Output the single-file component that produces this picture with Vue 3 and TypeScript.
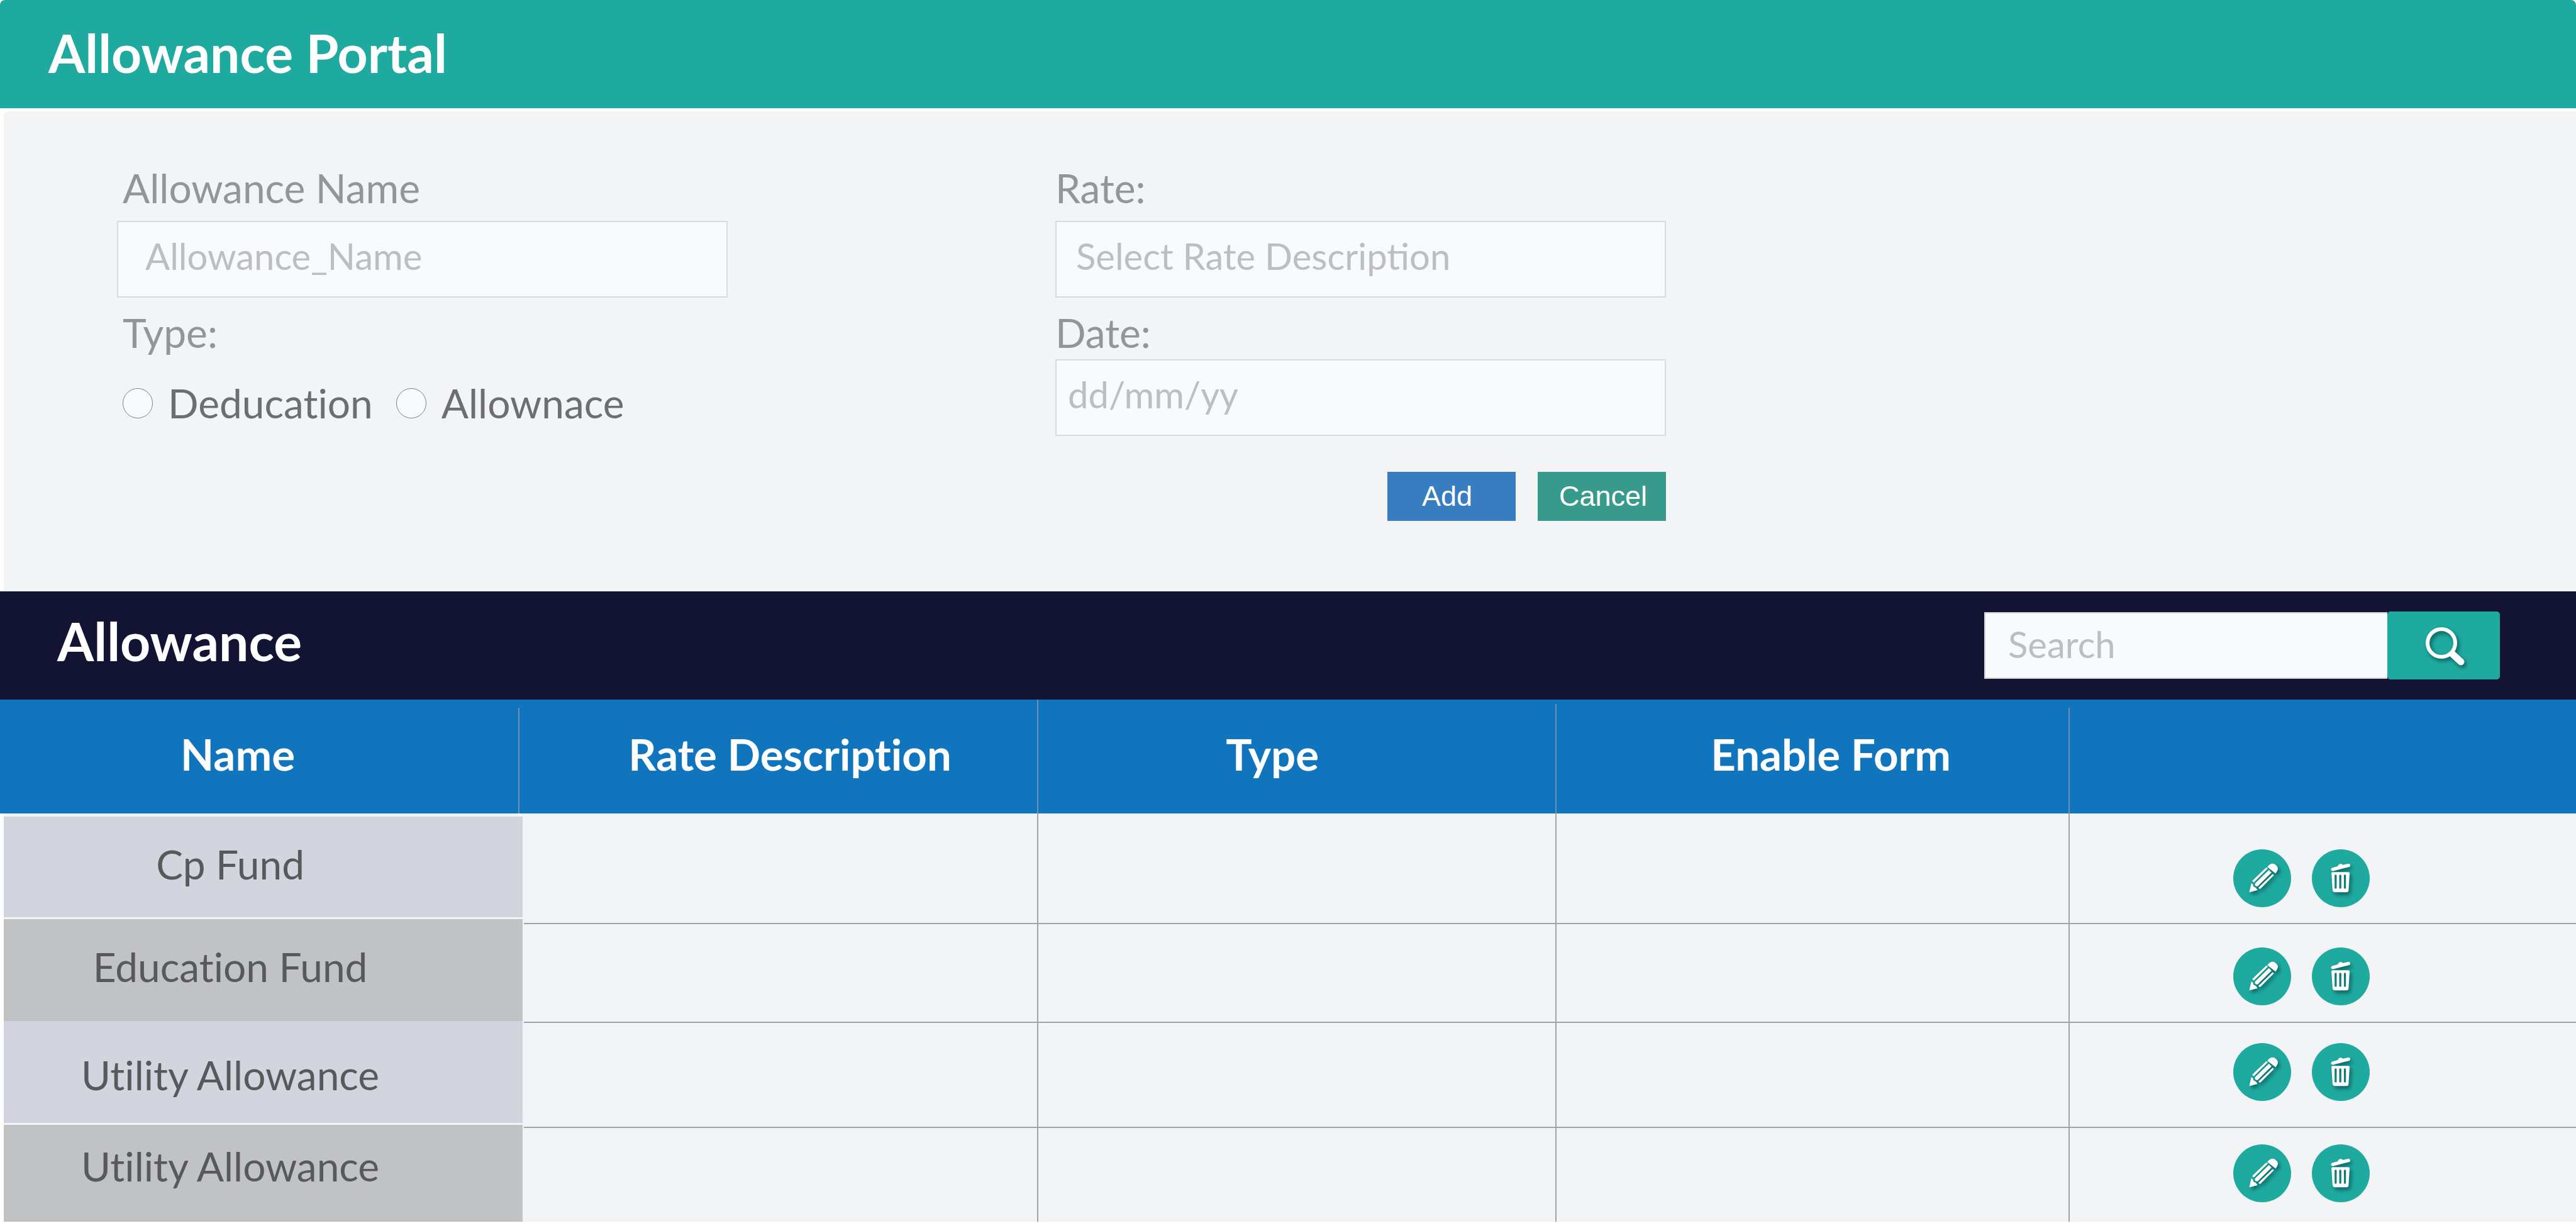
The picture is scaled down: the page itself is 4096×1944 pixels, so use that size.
<script setup lang="ts">
import { ref } from 'vue'

interface Allowance {
  id: number
  name: string
}

const allowanceName = ref('')
const rate = ref('')
const date = ref('')
const type = ref('')
const query = ref('')

const allowances: Allowance[] = [
  { id: 1, name: 'Cp Fund' },
  { id: 2, name: 'Education Fund' },
  { id: 3, name: 'Utility Allowance' },
  { id: 4, name: 'Utility Allowance' },
]
</script>

<template>
  <div class="page">
    <header class="topbar">
      <h1>Allowance Portal</h1>
    </header>

    <form class="panel" @submit.prevent>
      <div class="column">
        <label class="label" for="name">Allowance Name</label>
        <input id="name" v-model="allowanceName" class="field wide-inset" type="text" placeholder="Allowance_Name" />
        <fieldset>
          <legend class="label">Type:</legend>
          <div class="radios">
            <label><input v-model="type" type="radio" name="type" value="deduction" />Deducation</label>
            <label><input v-model="type" type="radio" name="type" value="allowance" />Allownace</label>
          </div>
        </fieldset>
      </div>
      <div class="column">
        <label class="label" for="rate">Rate:</label>
        <input id="rate" v-model="rate" class="field" type="text" placeholder="Select Rate Description" />
        <label class="label date-label" for="date">Date:</label>
        <input id="date" v-model="date" class="field narrow-inset" type="text" placeholder="dd/mm/yy" />
        <div class="actions">
          <button class="add" type="submit">Add</button>
          <button class="cancel" type="reset">Cancel</button>
        </div>
      </div>
    </form>

    <section>
      <div class="listbar">
        <h2>Allowance</h2>
        <form class="search" role="search" @submit.prevent>
          <input v-model="query" type="text" placeholder="Search" aria-label="Search" />
          <button type="submit" aria-label="Run search">
            <svg class="icon" viewBox="0 0 64 64" width="64" height="64" fill="none" stroke="#fff">
              <circle cx="28" cy="28" r="22" stroke-width="6" />
              <path d="M46 46 L59 58" stroke-width="11" stroke-linecap="round" />
            </svg>
          </button>
        </form>
      </div>

      <table>
        <colgroup>
          <col class="c-name" />
          <col class="c-rate" />
          <col class="c-type" />
          <col class="c-form" />
          <col />
        </colgroup>
        <thead>
          <tr>
            <th class="h-name" scope="col">Name</th>
            <th class="h-rate" scope="col">Rate Description</th>
            <th class="h-type" scope="col">Type</th>
            <th class="h-form" scope="col">Enable Form</th>
            <td></td>
          </tr>
        </thead>
        <tbody>
          <tr v-for="item in allowances" :key="item.id">
            <th class="name" scope="row"><div class="name-box">{{ item.name }}</div></th>
            <td></td>
            <td></td>
            <td></td>
            <td class="tools">
              <div>
                <button type="button" aria-label="Edit">
                  <svg class="icon" viewBox="0 0 112 112" width="92" height="92" fill="#fff">
                    <path d="M31 83 L35 66 Q39 67 39 72 Q44 73 47 79 Z" />
                    <path d="M66 34 Q72 26 79 28 Q88 33 86 40 Q85 43 82 47 Z" />
                    <path d="M64 35 L67 37 L40 64 Q37 64 37 61 Z" />
                    <path d="M69 40 L74 45 L48 71 Q44 73 42 69 Q41 67 43 65 Z" />
                    <path d="M76 48 L79 50 L53 76 Q49 77 49 74 Z" />
                  </svg>
                </button>
                <button type="button" aria-label="Delete">
                  <svg class="icon" viewBox="0 0 112 112" width="92" height="92" fill="#fff">
                    <path d="M39 36 L50 33 Q51 29 55 28 Q58 28 60 30 L70 28 Q73 27 74 30 Q75 33 72 34 L41 42 Q38 42 37 40 Q37 37 39 36 Z" />
                    <path fill-rule="evenodd" d="M41 44 H70 Q74 44 73 48 L71 79 Q71 83 67 83 H45 Q41 83 40 79 L38 48 Q37 44 41 44 Z M44 50 V75 Q46 78 48 75 V50 Q46 48 44 50 Z M53 50 V75 Q55 78 57 75 V50 Q55 48 53 50 Z M62 50 V75 Q64 78 66 75 V50 Q64 48 62 50 Z" />
                  </svg>
                </button>
              </div>
            </td>
          </tr>
        </tbody>
      </table>
    </section>
  </div>
</template>

<style>
body {
  margin: 0;
  background: #fff;
}
</style>

<style scoped>
.page {
  font-family: Lato, "Liberation Sans", sans-serif;
  font-variant-ligatures: none;
  color: #58595b;
  font-size: 64px;
  line-height: 80px;
}
h1,
h2 {
  margin: 0;
  color: #fff;
  font-size: 84px;
  line-height: 96px;
  font-weight: 700;
}
input,
button {
  box-sizing: border-box;
  margin: 0;
  font-family: inherit;
}
button {
  border: 0;
  padding: 0;
  cursor: pointer;
}
.topbar {
  background: #1faaa0;
  padding: 36px 77px 40px;
  border-radius: 8px 8px 0 0;
}

.panel {
  display: flex;
  gap: 521px;
  margin: 5px 0 0 6px;
  padding: 82px 180px 112px;
  border-radius: 8px 0 0 0;
  background: #f2f4f6;
}
.column {
  width: 971px;
  display: flex;
  flex-direction: column;
}
.label {
  padding: 0 9px;
  margin-bottom: 12px;
  color: #939598;
}
.column + .column .label {
  padding-left: 0;
}
.field {
  width: 100%;
  height: 122px;
  border: 2px solid #d8dadb;
  background: #f9fafc;
  padding: 0 31px 12px;
  font-size: 58px;
  color: #58595b;
}
.wide-inset {
  padding-left: 43px;
}
.narrow-inset {
  padding-left: 18px;
}
.field::placeholder,
.search input::placeholder {
  color: #bcbec0;
  opacity: 1;
}
fieldset {
  border: 0;
  margin: 16px 0 0;
  padding: 0;
  min-width: 0;
}
.radios {
  display: flex;
  gap: 37px;
  padding-left: 9px;
  margin-top: 20px;
  color: #6d6e71;
}
.radios label {
  display: flex;
  align-items: center;
  gap: 24px;
}
.radios input {
  appearance: none;
  width: 48px;
  height: 48px;
  border: 1px solid #808285;
  border-radius: 50%;
  background: #f9fafc;
}
.column .date-label {
  margin: 16px 0 2px;
  padding-left: 2px;
}
.actions {
  display: flex;
  justify-content: flex-end;
  gap: 35px;
  margin-top: 57px;
}
.actions button {
  width: 204px;
  height: 78px;
  color: #fff;
  font: 45px/78px "Liberation Sans", sans-serif;
}
.actions .add {
  background: #387dc0;
  padding-right: 14px;
}
.actions .cancel {
  background: #379a8b;
  padding-left: 4px;
}

.listbar {
  display: flex;
  align-items: center;
  justify-content: space-between;
  height: 172px;
  padding: 0 121px 0 91px;
  background: #131334;
}
.listbar h2 {
  padding-bottom: 14px;
}
.search {
  display: flex;
  align-items: center;
}
.search input {
  width: 641px;
  height: 106px;
  border: 2px solid #d1d3d4;
  border-right: 0;
  background: #f9fafc;
  padding: 0 36px 6px;
  font-size: 58px;
}
.search button {
  display: flex;
  align-items: center;
  justify-content: center;
  width: 179px;
  height: 108px;
  border-radius: 5px;
  background: #1faaa0;
}
.icon {
  display: block;
  overflow: visible;
  filter: drop-shadow(3px 4px 3px rgb(0 60 60 / 70%));
}

table {
  width: 100%;
  table-layout: fixed;
  border-collapse: separate;
  border-spacing: 0;
}
.c-name {
  width: 20.34%;
}
.c-rate {
  width: 19.97%;
}
.c-type {
  width: 20.12%;
}
.c-form {
  width: 19.92%;
}
th,
td {
  padding: 0;
  box-sizing: border-box;
}
thead th,
thead td {
  position: relative;
  height: 181px;
  padding-bottom: 8px;
  background: #1075bd;
  color: #fff;
  font-size: 69px;
  font-weight: 700;
}
thead th::after {
  content: "";
  position: absolute;
  right: 0;
  bottom: 0;
  width: 2px;
  height: 168px;
  background: #6f8fb4;
}
thead .h-name::after {
  right: 7px;
}
thead .h-type::after {
  height: 174px;
}
thead .h-rate::after {
  height: 181px;
}
thead .h-name {
  padding-right: 77px;
}
thead .h-rate {
  padding-left: 28px;
}
thead .h-type {
  padding-right: 80px;
}
thead .h-form {
  padding-left: 56px;
}

tbody tr {
  height: 157px;
  background: #f2f4f6;
}
tbody tr:first-child {
  height: 176px;
}
tbody tr:nth-child(3) {
  height: 167px;
}
tbody tr:last-child {
  height: 149px;
}
tbody th,
tbody td {
  vertical-align: top;
}
tbody td {
  border-right: 2px solid #a0a2a5;
  border-bottom: 2px solid #a0a2a5;
}
tbody td:last-child {
  border-right: 0;
}
tbody tr:last-child td {
  border-bottom: 0;
}
.name {
  height: 0;
  font-weight: 400;
  border-left: 6px solid #fff;
}
.name-box {
  height: 162px;
  box-sizing: border-box;
  margin: -8px 2px -20px 0;
  padding: 36px 105px 0 0;
  background: #d2d5dd;
}
tr:nth-child(even) .name-box {
  background: #c1c2c4;
}
tr:first-child .name-box {
  height: 160px;
  margin-top: 5px;
}
tr:nth-child(3) .name-box {
  margin-top: -3px;
  padding-top: 46px;
}
tr:last-child .name-box {
  height: 155px;
  margin-top: -5px;
  padding-top: 26px;
}
.tools div {
  display: flex;
  gap: 33px;
  padding: 37px 0 0 260px;
}
tr:first-child .tools div {
  padding-top: 57px;
}
tr:nth-child(3) .tools div {
  padding-top: 32px;
}
tr:last-child .tools div {
  padding-top: 26px;
}
.tools button {
  width: 92px;
  height: 92px;
  border-radius: 50%;
  background: #1faaa0;
}
</style>
